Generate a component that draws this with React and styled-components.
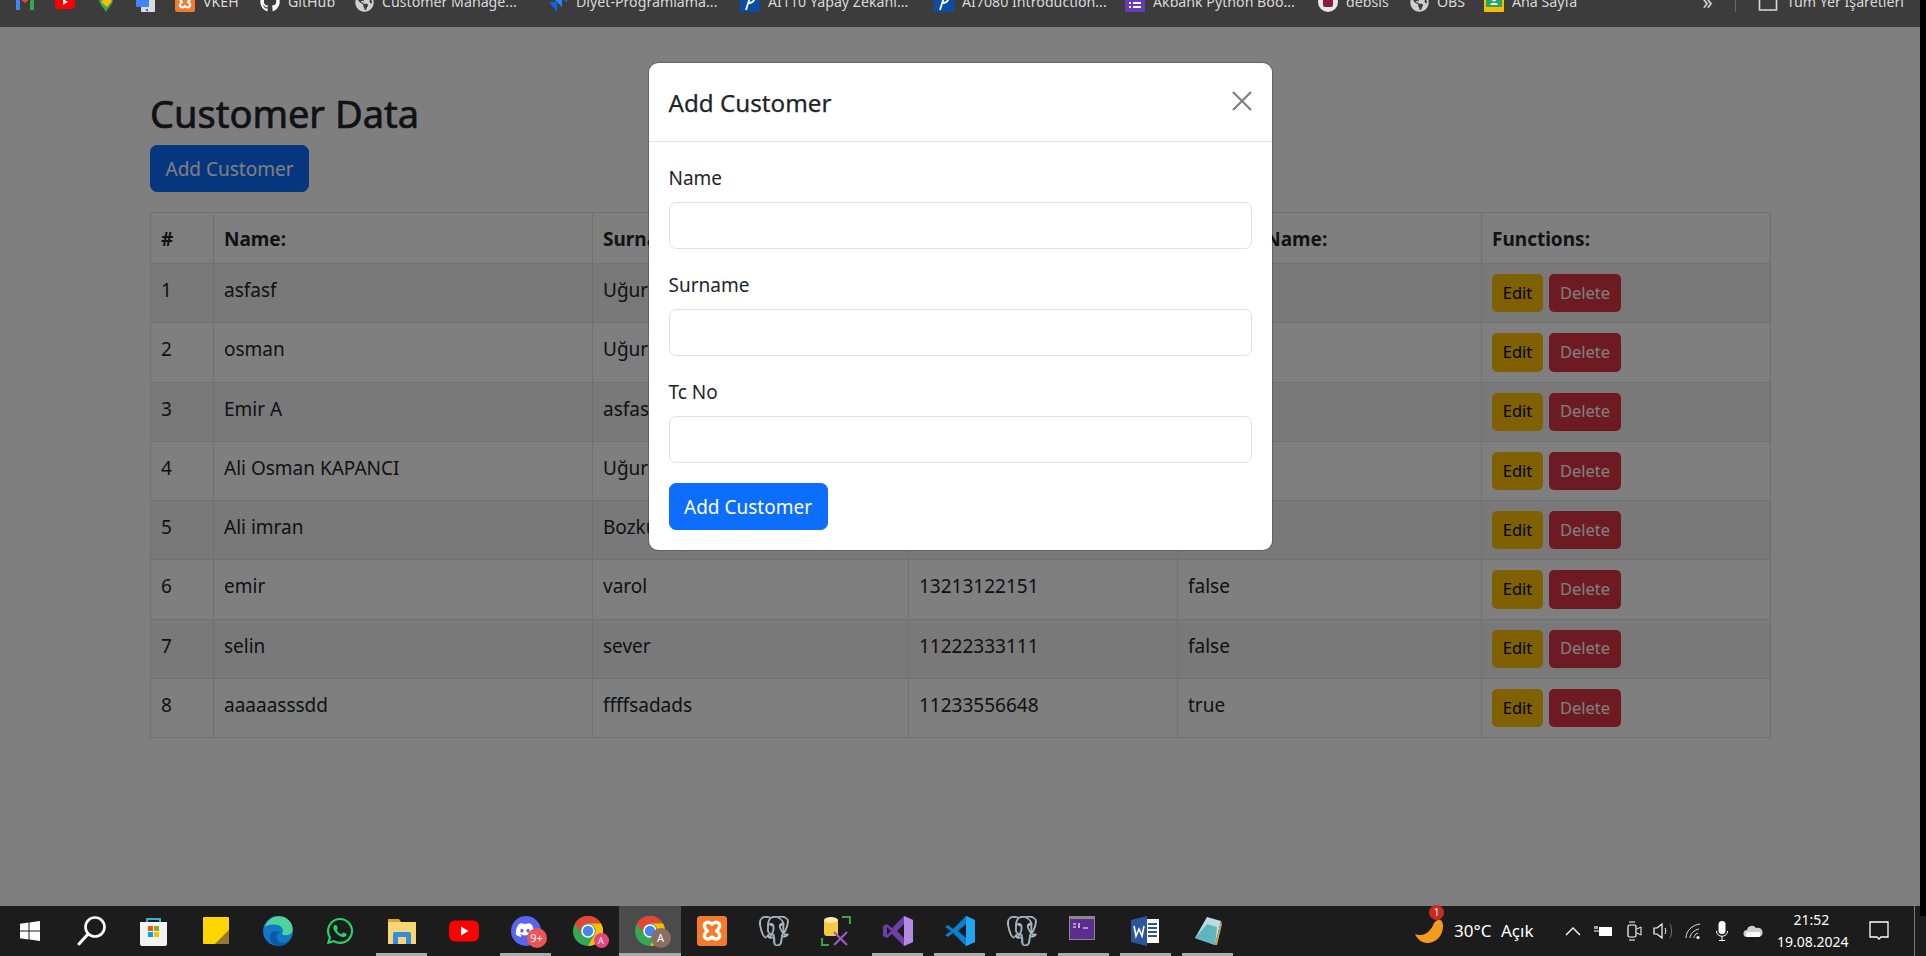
import React from "react";
import styled, { createGlobalStyle } from "styled-components";
import { FaGithub, FaWhatsapp, FaDiscord, FaGlobeAmericas } from "react-icons/fa";
import { SiPostgresql } from "react-icons/si";

const FONT = `"Noto Sans", "Open Sans", "Liberation Sans", sans-serif`;

const Global = createGlobalStyle`
  html, body { margin: 0; padding: 0; background: #000; overflow: hidden; }
  * { box-sizing: border-box; }
  body { font-family: ${FONT}; font-size: 19px; line-height: 1.5; color: #212529; }
`;

const Shell = styled.div`
  width: 1926px; height: 956px; display: grid; grid-template-rows: 27px 1fr 50px; background: #000;
`;

/* Browser bookmarks bar */
const BookmarksBar = styled.div`
  width: 1920px; background: #3c3c3c; overflow: hidden; display: flex; align-items: flex-start;
  padding-left: 15px; color: #d9d9d9; font-size: 14.2px; line-height: 20px;
`;
const BookmarkRow = styled.div` display: flex; align-items: center; margin-top: -8px; width: 100%; `;
const Bookmark = styled.div`
  width: ${(p) => p.$w}px; flex: none; display: flex; align-items: center; gap: 8px; white-space: nowrap;
  svg { flex: none; display: block; }
`;
const BookmarkRight = styled.div` margin-left: auto; display: flex; align-items: center; padding-right: 16px; white-space: nowrap; `;
const Chevrons = styled.span` font-size: 20px; margin-right: 22px; line-height: 20px; `;
const BarDivider = styled.span` width: 1px; height: 20px; background: #6a6a6a; margin-right: 22px; `;
const AllBookmarks = styled.span` display: flex; align-items: center; gap: 9px; `;

/* Page behind the dialog */
const Viewport = styled.main` position: relative; width: 1920px; background: #fff; overflow: hidden; `;
const Container = styled.div` padding: 60px 150px 0; `;
const Heading = styled.h2`
  margin: 0 0 10px; padding-top: 2px; height: 48px; font-size: 38px; font-weight: 400; line-height: 48px; color: #212529;
  -webkit-text-stroke: 0.7px #212529;
`;
const PrimaryButton = styled.button`
  display: block; width: 159px; height: 47px; padding: 2px 0 0; border: 1px solid #0d6efd; border-radius: 7px;
  background: #0d6efd; color: #fff; font: inherit; font-size: 19px; line-height: 1;
`;
const Table = styled.table`
  margin-top: 20px; width: 1620px; table-layout: fixed; border-collapse: collapse; border: 1px solid #dee2e6;
`;
const Col = styled.col` width: ${(p) => p.$w}px; `;
const Th = styled.th`
  padding: 11px 10px 9px; height: 50px; border: 1px solid #dee2e6; text-align: left; font-weight: 700; font-size: 19px; line-height: 30px;
  white-space: nowrap; overflow: hidden; word-spacing: -3px;
`;
const Row = styled.tr` &:nth-child(odd) td { background: rgba(0, 0, 0, 0.05); } `;
const Td = styled.td`
  padding: 11px 10px 9px; border: 1px solid #dee2e6; vertical-align: top; font-size: 19px; line-height: 30px;
  white-space: nowrap;
`;
const ActionCell = styled(Td)` padding: 10px; `;
const Actions = styled.div` display: flex; gap: 6px; `;
const SmallButton = styled.button`
  height: 38.25px; padding: 0; width: ${(p) => p.$w}px; border: 0; border-radius: 5px; font: inherit; font-size: 16.5px; line-height: 1;
  background: ${(p) => p.$bg}; color: ${(p) => p.$fg};
`;

/* Dialog */
const Backdrop = styled.div`
  position: absolute; inset: 0; background: rgba(0, 0, 0, 0.5); display: flex; justify-content: center; align-items: flex-start;
  padding-top: 35px;
`;
const Modal = styled.div`
  width: 625px; background: #fff; border: 1px solid rgba(0, 0, 0, 0.2); border-radius: 10px; background-clip: padding-box;
`;
const ModalHeader = styled.div`
  height: 78.5px; display: flex; align-items: center; justify-content: space-between; padding: 0 20px; border-bottom: 1px solid #dee2e6;
`;
const ModalTitle = styled.h5`
  margin: 2px 0 0; font-size: 24.2px; font-weight: 400; line-height: 37px; color: #212529; -webkit-text-stroke: 0.25px #212529;
`;
const CloseButton = styled.button`
  width: 20px; height: 20px; padding: 0; border: 0; background: none; color: #7f7f7f; margin-top: -1px;
  svg { display: block; }
`;
const ModalBody = styled.div` padding: 20px; `;
const Field = styled.div` margin-bottom: 20px; `;
const Label = styled.label` display: block; font-size: 19px; line-height: 30px; padding-top: 1px; height: 30px; margin-bottom: 10px; color: #212529; `;
const Input = styled.input`
  display: block; width: 100%; height: 47px; border: 1px solid #dee2e6; border-radius: 7px; background: #fff; outline: none;
`;

/* Windows taskbar */
const Taskbar = styled.footer`
  position: relative; background: #1c1c1c; display: flex; align-items: stretch; color: #fff;
  &::after { content: ""; position: absolute; right: 0; top: 0; width: 6px; height: 10px; background: #000; }
`;
const TaskButtons = styled.div` display: flex; margin-left: -1.5px; `;
const TaskButton = styled.div`
  position: relative; width: 62px; height: 50px; display: flex; align-items: center; justify-content: center;
  background: ${(p) => (p.$active ? "#4b4b4b" : "transparent")};
  &::after {
    content: ""; position: absolute; bottom: 0; height: 3px; background: #aaa; display: ${(p) => (p.$open ? "block" : "none")};
    left: ${(p) => (p.$active ? "0" : "5.5px")}; right: ${(p) => (p.$active ? "0" : "5.5px")};
  }
`;
const IconWrap = styled.div` position: relative; width: 30px; height: 30px; svg { display: block; } `;
const Badge = styled.span`
  position: absolute; right: -6px; bottom: -2px; width: ${(p) => p.$size}px; height: ${(p) => p.$size}px; border-radius: 50%;
  background: ${(p) => p.$bg}; color: #fff; font-size: ${(p) => p.$font}px; line-height: ${(p) => p.$size}px; text-align: center;
`;
const Tray = styled.div` margin-left: auto; display: flex; align-items: center; height: 50px; `;
const TrayItem = styled.div`
  width: ${(p) => p.$w}px; flex: none; display: flex; align-items: center; font-size: 17px; color: #fff; white-space: nowrap; position: relative;
  svg { display: block; }
`;
const WeatherDot = styled.span`
  position: absolute; left: 14px; top: -12px; width: 15px; height: 15px; border-radius: 50%; background: #c62b22; color: #fff;
  font-size: 10px; line-height: 15px; text-align: center;
`;
const Clock = styled.div` width: 69px; flex: none; text-align: center; font-size: 14px; line-height: 22px; color: #fff; white-space: nowrap; `;
const Notify = styled.div` margin-left: 23px; margin-right: 25px; width: 20px; flex: none; svg { display: block; } `;
const TrayDivider = styled.div` width: 1px; height: 50px; background: #7a7a7a; margin-right: 11px; `;

/* Icons */
const Gmail = () => (
  <svg width="20" height="20" viewBox="0 0 20 20"><path d="M1 4v14h4V9z" fill="#4285f4"/><path d="M15 9v9h4V4z" fill="#34a853"/><path d="M1 4l9 7 9-7-2-2-7 5-7-5z" fill="#ea4335"/></svg>
);
const YT = ({ s = 20 }) => (
  <svg width={s} height={s} viewBox="0 0 20 20"><rect x="0" y="3" width="20" height="14" rx="4" fill="#f00"/><path d="M8 7l5 3-5 3z" fill="#fff"/></svg>
);
const Maps = () => (
  <svg width="20" height="20" viewBox="0 0 20 20"><path d="M10 20C7 15 3 12 3 7a7 7 0 0 1 14 0c0 5-4 8-7 13z" fill="#34a853"/><path d="M3 7a7 7 0 0 1 7-7v7z" fill="#4285f4"/><path d="M10 0a7 7 0 0 1 7 7h-7z" fill="#ea4335"/><path d="M5 10l6-6 5 5-5 6z" fill="#fbbc04"/></svg>
);
const Translate = () => (
  <svg width="20" height="20" viewBox="0 0 20 20"><rect x="5" y="3" width="14" height="17" rx="1" fill="#dadce0"/><rect x="0" y="0" width="13" height="15" rx="1" fill="#4285f4"/><path d="M9 17h3v3z" fill="#3367d6"/></svg>
);
const Xampp = ({ s = 20 }) => (
  <svg width={s} height={s} viewBox="0 0 20 20"><rect width="20" height="20" rx="2" fill="#f37b2a"/><path d="M6 4.5c2-1 3 0 4 1 1-1 2-2 4-1 2 1 1 4-1 5.5 2 1 3 4 1 5-2 1-3 0-4-1-1 1-2 2-4 1-2-1-1-4 1-5-2-1.5-3-4.5-1-5.500z" fill="none" stroke="#fff" strokeWidth="2.2" strokeLinejoin="round"/></svg>
);
const Globe = () => <FaGlobeAmericas size={19} color="#cfcfcf" />;
const Jira = () => (
  <svg width="20" height="20" viewBox="0 0 20 20"><path d="M19 0H9l10 10z" fill="#2684ff"/><path d="M14 5H4l10 10z" fill="#2684ff"/><path d="M9 10H1l8 10z" fill="#0a66e0"/></svg>
);
const Pearson = () => (
  <svg width="20" height="20" viewBox="0 0 20 20"><rect width="20" height="20" fill="#0a4da2"/><path d="M6 18c2-6 3-11 5-14 3-1 5 1 3 4-1 2-3 3-5 3" fill="none" stroke="#fff" strokeWidth="1.8"/></svg>
);
const Forms = () => (
  <svg width="20" height="20" viewBox="0 0 20 20"><rect width="20" height="20" rx="1" fill="#673ab7"/><path d="M4 6h2v2H4zM8 6h8v2H8zM4 10h2v2H4zM8 10h8v2H8zM4 14h2v2H4zM8 14h8v2H8z" fill="#fff"/></svg>
);
const Debsis = () => (
  <svg width="20" height="20" viewBox="0 0 20 20"><circle cx="10" cy="10" r="10" fill="#e6e6e6"/><rect x="5" y="5" width="10" height="10" rx="2" fill="#8a1c3c"/></svg>
);
const Classroom = () => (
  <svg width="20" height="20" viewBox="0 0 20 20"><rect width="20" height="20" rx="1" fill="#f9bb00"/><rect x="2" y="2" width="16" height="13" fill="#25a667"/><circle cx="10" cy="7" r="2.4" fill="#e8f5e9"/><path d="M6 13c0-3 8-3 8 0z" fill="#e8f5e9"/></svg>
);
const FolderOutline = () => (
  <svg width="20" height="20" viewBox="0 0 20 20"><path d="M1.5 1v17h17V1" fill="none" stroke="#d9d9d9" strokeWidth="1.6"/></svg>
);
const WinLogo = () => (
  <svg width="20" height="20" viewBox="0 0 20 20" style={{ margin: "5px" }}><path d="M0 2.8L8.5 1.6v8H0zM9.5 1.4L20 0v9.6H9.5zM0 10.5h8.5v8L0 17.3zM9.5 10.5H20V20L9.5 18.6z" fill="#fff"/></svg>
);
const Search = () => (
  <svg width="30" height="30" viewBox="0 0 30 30"><circle cx="18" cy="11" r="9.5" fill="none" stroke="#fff" strokeWidth="2.6"/><path d="M11 18L2 28" stroke="#fff" strokeWidth="3" strokeLinecap="round"/></svg>
);
const Store = () => (
  <svg width="30" height="30" viewBox="0 0 30 30"><path d="M8 8V3h13v5" fill="none" stroke="#29b6d8" strokeWidth="2"/><path d="M1 6h27v22a2 2 0 0 1-2 2H3a2 2 0 0 1-2-2z" fill="#f3f3f3"/><rect x="9" y="10" width="5" height="5" fill="#f25022"/><rect x="15" y="10" width="5" height="5" fill="#7fba00"/><rect x="9" y="16" width="5" height="5" fill="#00a4ef"/><rect x="15" y="16" width="5" height="5" fill="#ffb900"/></svg>
);
const Sticky = () => (
  <svg width="30" height="30" viewBox="0 0 30 30"><rect x="2" y="1" width="26" height="27" rx="1" fill="#ffd500"/><path d="M28 14v14H14z" fill="#4a4a4a"/><path d="M28 14L14 28h14z" fill="#e7a416" opacity=".5"/></svg>
);
const Edge = () => (
  <svg width="30" height="30" viewBox="0 0 30 30"><circle cx="15" cy="15" r="15" fill="#0f78c8"/><path d="M2 11C5 1 14-1 21 1c7 3 10 10 8 15-2 4-8 4-10 2 2-3 1-8-5-9-5-1-10 0-12 2z" fill="#4fd39a"/><path d="M16 30c-6 0-10-5-9-11 1-4 7-5 10-2-3 0-4 3-3 6 1 4 6 5 11 3-2 3-5 4-9 4z" fill="#0a5aa6"/></svg>
);
const Folder = () => (
  <svg width="30" height="30" viewBox="0 0 30 30"><path d="M1 3h11l2 3H1z" fill="#e0a52c"/><rect x="1" y="6" width="28" height="22" fill="#f8d677"/><path d="M6 28V18a2 2 0 0 1 2-2h14a2 2 0 0 1 2 2v10h-5v-7h-8v7z" fill="#2f8fdc"/></svg>
);
const Chrome = () => (
  <svg width="30" height="30" viewBox="0 0 30 30"><circle cx="15" cy="15" r="15" fill="#34a853"/><path d="M15 0a15 15 0 0 1 13 7.5H15a7.5 7.5 0 0 0-6.5 11.2L2 7.5A15 15 0 0 1 15 0z" fill="#ea4335"/><path d="M28 7.5A15 15 0 0 1 15 30l6.5-11.2A7.5 7.5 0 0 0 15 7.5z" fill="#fbbc04"/><circle cx="15" cy="15" r="6" fill="#4285f4" stroke="#fff" strokeWidth="1.6"/></svg>
);
const Discord = () => (
  <svg width="30" height="30" viewBox="0 0 30 30"><circle cx="15" cy="15" r="15" fill="#5865f2"/><foreignObject x="4" y="4" width="20" height="20"><FaDiscord size={20} color="#fff" /></foreignObject></svg>
);
const Elephant = () => <SiPostgresql size={30} color="#4b84ae" style={{ stroke: "#d8dfe5", strokeWidth: 0.6 }} />;
const DbTool = () => (
  <svg width="30" height="30" viewBox="0 0 30 30"><rect x="3" y="3" width="14" height="17" rx="3" fill="#f6c945"/><ellipse cx="10" cy="4" rx="7" ry="3" fill="#ffe9a8"/><path d="M21 1h8v7M1 22v7h7" fill="none" stroke="#35a24c" strokeWidth="2.2"/><path d="M13 16l13 13M26 16L13 29" stroke="#9a5cc0" strokeWidth="2.2"/></svg>
);
const VisualStudio = () => (
  <svg width="30" height="30" viewBox="0 0 30 30"><path d="M21 0l9 4v22l-9 4-12-12-5 4-4-2V10l4-2 5 4z" fill="#6c3fa8"/><path d="M21 0l9 4v22l-9 4z" fill="#b58be6"/><path d="M21 8v14l-7-7z" fill="#1c1c1c"/><path d="M4 11l4 4-4 4z" fill="#1c1c1c"/></svg>
);
const VSCode = () => (
  <svg width="30" height="30" viewBox="0 0 30 30"><path d="M21 0l9 4v22l-9 4L8 17l-5 4-3-2 6-4-6-4 3-2 5 4z" fill="#0a7fcf"/><path d="M21 0l9 4v22l-9 4z" fill="#20a5ee"/><path d="M21 8v14l-8-7z" fill="#1c1c1c"/></svg>
);
const Console = () => (
  <svg width="26" height="24" viewBox="0 0 26 24"><rect width="26" height="24" fill="#8a8a8a"/><rect x="1" y="3" width="24" height="20" fill="#5c2d91"/><path d="M4 8h3M4 11h3M10 7v5M14 12h5" stroke="#fff" strokeWidth="1.2"/></svg>
);
const Word = () => (
  <svg width="28" height="30" viewBox="0 0 28 30"><rect x="10" y="3" width="18" height="24" fill="#fff"/><path d="M17 8h9M17 12h9M17 16h9M17 20h9" stroke="#2b579a" strokeWidth="2"/><path d="M0 4l16-4v30L0 26z" fill="#2b579a"/><path d="M3 10l2 10 3-7 3 7 2-10" fill="none" stroke="#fff" strokeWidth="1.6"/></svg>
);
const Notepad = () => (
  <svg width="30" height="30" viewBox="0 0 30 30"><path d="M14 1l14 4-6 24L2 22z" fill="#bcdde0"/><path d="M2 22L14 8l10 3-2 18z" fill="#5fb6bf"/><path d="M22 29l6-24 1 3-5 21z" fill="#c9a65c"/></svg>
);
const Weather = () => (
  <svg width="28" height="28" viewBox="0 0 28 28"><path d="M0 17c6 3 15 0 19-11 5-6 9-3 9 3 0 10-7 17-16 17C7 26 2 22 0 17z" fill="#f39a1f"/></svg>
);
const Caret = () => <svg width="16" height="9" viewBox="0 0 16 9"><path d="M1 8l7-7 7 7" fill="none" stroke="#fff" strokeWidth="1.4"/></svg>;
const Battery = () => <svg width="20" height="14" viewBox="0 0 20 14"><rect x="6" y="3" width="13" height="9" fill="#fff"/><path d="M1 7h5M2 2v3M4 2v3" stroke="#fff" strokeWidth="1.2"/></svg>;
const Meet = () => <svg width="15" height="20" viewBox="0 0 15 20"><rect x="1" y="4" width="8" height="12" rx="1.5" fill="none" stroke="#fff" strokeWidth="1.2"/><path d="M10 8l4-2v8l-4-2M2 1h6M2 19h6" fill="none" stroke="#fff" strokeWidth="1"/></svg>;
const Speaker = () => <svg width="20" height="18" viewBox="0 0 20 18"><path d="M1 6h3l5-4v14l-5-4H1z" fill="none" stroke="#fff" strokeWidth="1.2"/><path d="M12 6c1 2 1 4 0 6" fill="none" stroke="#fff" strokeWidth="1"/><path d="M17 2c2 4 2 10 0 14" fill="none" stroke="#777" strokeWidth="1"/></svg>;
const Wifi = () => <svg width="16" height="18" viewBox="0 0 16 18"><path d="M1 16C1 9 7 3 15 2M5 16c0-4 4-8 9-9M9 16c0-2 1-4 4-5" fill="none" stroke="#ddd" strokeWidth="1"/><circle cx="13" cy="15.5" r="1.6" fill="#fff"/></svg>;
const Mic = () => <svg width="12" height="20" viewBox="0 0 12 20"><rect x="2.5" y="0" width="7" height="13" rx="3.5" fill="#fff"/><path d="M0.5 10c0 7 11 7 11 0M6 15v4M3 19.5h6" fill="none" stroke="#fff" strokeWidth="1"/></svg>;
const Cloud = () => <svg width="20" height="14" viewBox="0 0 20 14"><path d="M4 13a3.5 3.5 0 0 1 0-7 5 5 0 0 1 9-2 4.5 4.5 0 0 1 3.5 9z" fill="#cfcfcf"/><path d="M4 13a3 3 0 0 1 1-5h11a3 3 0 0 1 0 5z" fill="#fff"/></svg>;
const Bubble = () => <svg width="20" height="20" viewBox="0 0 20 20"><path d="M1 1h18v15h-7l-2 2-2-2H1z" fill="none" stroke="#fff" strokeWidth="1.3"/></svg>;

const bookmarks = [
  { w: 40, icon: <Gmail /> },
  { w: 41, icon: <YT /> },
  { w: 40, icon: <Maps /> },
  { w: 39, icon: <Translate /> },
  { w: 85, icon: <Xampp />, label: "VKEH" },
  { w: 95, icon: <FaGithub size={20} color="#fff" />, label: "GitHub" },
  { w: 193, icon: <Globe />, label: "Customer Manage..." },
  { w: 192, icon: <Jira />, label: "Diyet-Programlama..." },
  { w: 194, icon: <Pearson />, label: "AI110 Yapay Zekanı..." },
  { w: 191, icon: <Pearson />, label: "AI7080 Introduction..." },
  { w: 193, icon: <Forms />, label: "Akbank Python Boo..." },
  { w: 92, icon: <Debsis />, label: "debsis" },
  { w: 74, icon: <Globe />, label: "OBS" },
  { w: 90, icon: <Classroom />, label: "Ana Sayfa" },
];

const customers = [
  ["asfasf", "Uğur", "", ""],
  ["osman", "Uğur", "", ""],
  ["Emir A", "asfasf", "", ""],
  ["Ali Osman KAPANCI", "Uğur", "", ""],
  ["Ali imran", "Bozkurt", "", ""],
  ["emir", "varol", "13213122151", "false"],
  ["selin", "sever", "11222333111", "false"],
  ["aaaaasssdd", "ffffsadads", "11233556648", "true"],
];

const taskItems = [
  { icon: <WinLogo /> },
  { icon: <Search /> },
  { icon: <Store /> },
  { icon: <Sticky /> },
  { icon: <Edge /> },
  { icon: <FaWhatsapp size={30} color="#25d366" /> },
  { icon: <Folder />, open: true },
  { icon: <YT s={30} /> },
  { icon: <Discord />, open: true, badge: { text: "9+", size: 20, font: 11, bg: "#ed5555" } },
  { icon: <Chrome />, badge: { text: "A", size: 15, font: 9, bg: "#e8457f" } },
  { icon: <Chrome />, open: true, active: true, badge: { text: "A", size: 20, font: 11, bg: "#8a6d63" } },
  { icon: <Xampp s={30} /> },
  { icon: <Elephant /> },
  { icon: <DbTool /> },
  { icon: <VisualStudio />, open: true },
  { icon: <VSCode />, open: true },
  { icon: <Elephant />, open: true },
  { icon: <Console />, open: true },
  { icon: <Word />, open: true },
  { icon: <Notepad />, open: true },
];

export default function App() {
  return (
    <Shell>
      <Global />
      <BookmarksBar>
        <BookmarkRow>
          {bookmarks.map((b, i) => (
            <Bookmark key={i} $w={b.w}>
              {b.icon}
              {b.label && <span>{b.label}</span>}
            </Bookmark>
          ))}
          <BookmarkRight>
            <Chevrons>»</Chevrons>
            <BarDivider />
            <AllBookmarks><FolderOutline />Tüm Yer İşaretleri</AllBookmarks>
          </BookmarkRight>
        </BookmarkRow>
      </BookmarksBar>

      <Viewport>
        <Container>
          <Heading>Customer Data</Heading>
          <PrimaryButton>Add Customer</PrimaryButton>
          <Table>
            <colgroup>
              <Col $w={63} /><Col $w={379} /><Col $w={316} /><Col $w={269} /><Col $w={304} /><Col $w={289} />
            </colgroup>
            <thead>
              <tr>
                <Th>#</Th><Th>Name:</Th><Th>Surname:</Th><Th>Tc No:</Th><Th>Married Name:</Th><Th>Functions:</Th>
              </tr>
            </thead>
            <tbody>
              {customers.map((c, i) => (
                <Row key={i}>
                  <Td>{i + 1}</Td>
                  <Td>{c[0]}</Td>
                  <Td>{c[1]}</Td>
                  <Td>{c[2]}</Td>
                  <Td>{c[3]}</Td>
                  <ActionCell>
                    <Actions>
                      <SmallButton $w={51} $bg="#ffc107" $fg="#000">Edit</SmallButton>
                      <SmallButton $w={72} $bg="#dc3545" $fg="#fff">Delete</SmallButton>
                    </Actions>
                  </ActionCell>
                </Row>
              ))}
            </tbody>
          </Table>
        </Container>

        <Backdrop>
          <Modal>
            <ModalHeader>
              <ModalTitle>Add Customer</ModalTitle>
              <CloseButton aria-label="Close">
                <svg width="20" height="20" viewBox="0 0 20 20"><path d="M1 1l18 18M19 1L1 19" stroke="currentColor" strokeWidth="2.2"/></svg>
              </CloseButton>
            </ModalHeader>
            <ModalBody>
              <Field><Label>Name</Label><Input /></Field>
              <Field><Label>Surname</Label><Input /></Field>
              <Field><Label>Tc No</Label><Input /></Field>
              <PrimaryButton>Add Customer</PrimaryButton>
            </ModalBody>
          </Modal>
        </Backdrop>
      </Viewport>

      <Taskbar>
        <TaskButtons>
          {taskItems.map((t, i) => (
            <TaskButton key={i} $open={t.open} $active={t.active}>
              <IconWrap>
                {t.icon}
                {t.badge && <Badge $size={t.badge.size} $font={t.badge.font} $bg={t.badge.bg}>{t.badge.text}</Badge>}
              </IconWrap>
            </TaskButton>
          ))}
        </TaskButtons>
        <Tray>
          <TrayItem $w={39}><Weather /><WeatherDot>1</WeatherDot></TrayItem>
          <TrayItem $w={47}>30°C</TrayItem>
          <TrayItem $w={64}>Açık</TrayItem>
          <TrayItem $w={28}><Caret /></TrayItem>
          <TrayItem $w={34}><Battery /></TrayItem>
          <TrayItem $w={26}><Meet /></TrayItem>
          <TrayItem $w={32}><Speaker /></TrayItem>
          <TrayItem $w={31}><Wifi /></TrayItem>
          <TrayItem $w={27}><Mic /></TrayItem>
          <TrayItem $w={34}><Cloud /></TrayItem>
          <Clock>21:52<br />19.08.2024</Clock>
          <Notify><Bubble /></Notify>
          <TrayDivider />
        </Tray>
      </Taskbar>
    </Shell>
  );
}
